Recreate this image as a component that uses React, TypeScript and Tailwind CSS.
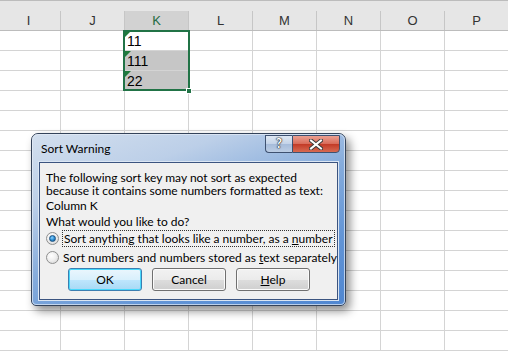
import React from "react";

const cols = ["I", "J", "K", "L", "M", "N", "O", "P"];
const rowCount = 16;
const kValues: Record<number, string> = { 0: "11", 1: "111", 2: "22" };

function Radio({ checked }: { checked: boolean }) {
  return (
    <span className="relative inline-flex w-[13px] h-[13px] shrink-0 rounded-full border border-[#8e8f8f] bg-[radial-gradient(circle_at_40%_35%,#ffffff_0%,#f0f0f0_45%,#cfcfcf_100%)] items-center justify-center">
      {checked && (
        <span className="block w-[7px] h-[7px] rounded-full bg-[radial-gradient(circle_at_40%_35%,#8fd3ff_0%,#2b8fd6_50%,#124f86_100%)] border border-[#1c5180]" />
      )}
    </span>
  );
}

function Btn({ children, def }: { children: React.ReactNode; def?: boolean }) {
  return (
    <div
      className={
        "w-[74px] h-[23px] rounded-[3px] flex items-center justify-center text-[12px] text-black " +
        (def
          ? "border border-[#3c7fb1] shadow-[inset_0_0_0_1px_#48d8fb] bg-[linear-gradient(#eaf6fd,#d9f0fc_50%,#bee6fd_51%,#a7d9f5)]"
          : "border border-[#707070] shadow-[inset_0_0_0_1px_#fbfbfb] bg-[linear-gradient(#f2f2f2,#ebebeb_50%,#dddddd_51%,#cfcfcf)]")
      }
    >
      {children}
    </div>
  );
}

export default function App() {
  return (
    <div className="relative w-[508px] h-[352px] overflow-hidden bg-white font-['Liberation_Sans',sans-serif]">
      {/* column header */}
      <div className="h-[31px] bg-[#e6e6e6] border-t border-[#bcbcbc] border-b border-[#ababab]">
        <div className="flex ml-[-3px] mt-[10px] h-[19px]">
          {cols.map((c) => (
            <div
              key={c}
              className={
                "w-[64px] shrink-0 h-full border-r border-[#c6c6c6] flex items-center justify-center text-[13px] " +
                (c === "K" ? "bg-[#d2d2d2] text-[#1e6b41]" : "text-[#333333]")
              }
            >
              {c}
            </div>
          ))}
        </div>
      </div>
      {/* grid */}
      <div className="flex flex-col ml-[-3px]">
        {Array.from({ length: rowCount }).map((_, r) => (
          <div key={r} className="flex h-[20px]">
            {cols.map((c) => {
              const isK = c === "K" && r < 3;
              return (
                <div
                  key={c}
                  className={
                    "relative w-[64px] shrink-0 h-full border-r border-b border-[#d4d4d4] " +
                    (isK && r > 0 ? "bg-[#c6c6c6]" : "bg-white")
                  }
                >
                  {isK && (
                    <>
                      <span className="absolute left-0 top-0 w-0 h-0 border-t-[6px] border-t-[#1f7a3b] border-r-[6px] border-r-transparent" />
                      <span className="absolute left-[2px] bottom-[1px] text-[14px] leading-[16px] text-black">
                        {kValues[r]}
                      </span>
                    </>
                  )}
                </div>
              );
            })}
          </div>
        ))}
      </div>

      {/* selection outline */}
      <div className="absolute left-[123px] top-[30px] w-[67px] h-[61px] border-2 border-[#217346]" />
      <div className="absolute left-[186px] top-[88px] w-[6px] h-[6px] bg-[#217346] border border-white" />

      {/* dialog */}
      <div className="absolute left-[31px] top-[133px] w-[315px] h-[173px] rounded-t-[7px] rounded-b-[5px] border border-[#34435a] shadow-[4px_5px_10px_rgba(0,0,0,0.45)] bg-[linear-gradient(160deg,#d3dfee_0%,#bccfe8_25%,#86acdc_50%,#6395d6_75%,#4f86d0_100%)] font-['Lato',sans-serif]">
        <div className="rounded-t-[6px] rounded-b-[4px] border border-[#e5edf7]/70 h-full flex flex-col">
          {/* title bar */}
          <div className="relative h-[27px] flex items-center pl-[8px] text-[12px] text-black">
            <span className="mt-[1px]">Sort Warning</span>
            <div className="absolute right-[4px] top-[0px] flex">
              <div className="w-[27px] h-[18px] rounded-bl-[4px] border border-[#3e5170] border-r-0 bg-[linear-gradient(#dfe8f3,#c3d3e8_50%,#a6bcda_51%,#bccde4)] flex items-center justify-center text-white font-bold text-[13px] [text-shadow:0_0_1px_#222,0_0_1px_#222,0_0_2px_#333]">
                ?
              </div>
              <div className="w-[48px] h-[18px] rounded-br-[4px] border border-[#3e5170] bg-[linear-gradient(#eba092,#d86a58_50%,#c23a26_51%,#d76a52)] flex items-center justify-center">
                <svg width="14" height="11" viewBox="0 0 14 11">
                  <path d="M2 1.5 L12 9.5 M12 1.5 L2 9.5" stroke="#3a3a3a" strokeWidth="4" strokeLinecap="square" />
                  <path d="M2 1.5 L12 9.5 M12 1.5 L2 9.5" stroke="#ffffff" strokeWidth="2" strokeLinecap="square" />
                </svg>
              </div>
            </div>
          </div>
          {/* client */}
          <div className="mx-[6px] mb-[4px] flex-1 border border-[#3b5480] shadow-[0_0_0_1px_#dbe6f3] bg-[#f0f0f0] text-[12px] leading-[14px] text-black pl-[6px] pt-[8px] whitespace-nowrap">
            <div>The following sort key may not sort as expected</div>
            <div className="mt-[-1px]">because it contains some numbers formatted as text:</div>
            <div className="leading-[16px]">Column K</div>
            <div className="leading-[16px]">What would you like to do?</div>
            <div className="flex items-center mt-[-1px] h-[18px]">
              <Radio checked />
              <span className="ml-[3px] px-[1px] border border-dotted border-[#333] leading-[15px]">
                Sort anything that looks like a number, as a <span className="underline">n</span>umber
              </span>
            </div>
            <div className="flex items-center mt-[1px] h-[18px]">
              <Radio checked={false} />
              <span className="ml-[4px] leading-[15px]">
                Sort numbers and numbers stored as <span className="underline">t</span>ext separately
              </span>
            </div>
            <div className="flex gap-[10px] ml-[22px] mt-[2px]">
              <Btn def>OK</Btn>
              <Btn>Cancel</Btn>
              <Btn>
                <span>
                  <span className="underline">H</span>elp
                </span>
              </Btn>
            </div>
          </div>
        </div>
      </div>
    </div>
  );
}
